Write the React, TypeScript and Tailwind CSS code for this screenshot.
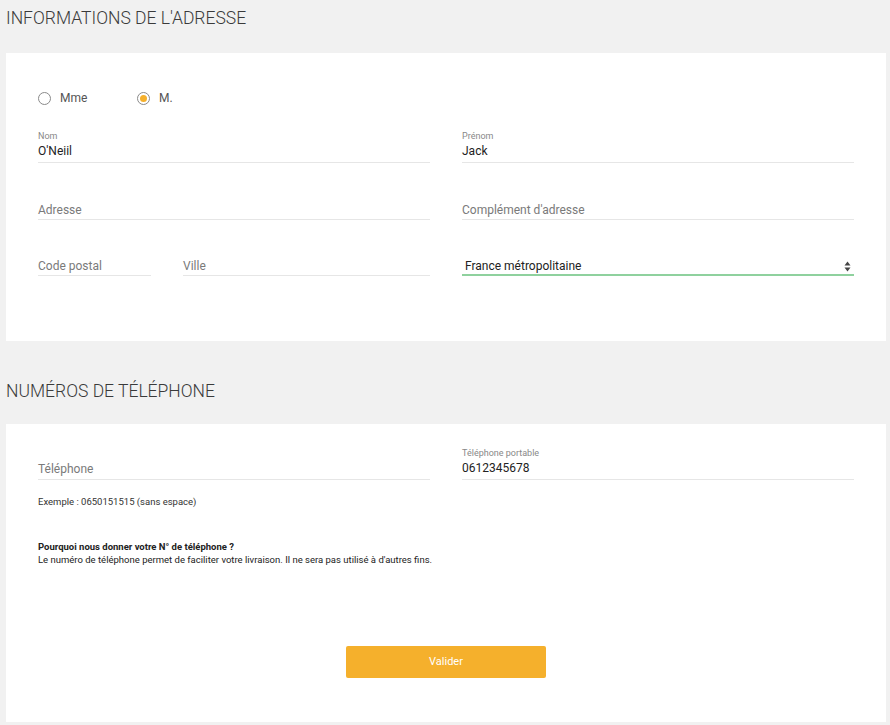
import React from "react";

const font = { fontFamily: "Roboto, 'Liberation Sans', sans-serif" };

function Radio({ label, checked, className = "" }: { label: string; checked?: boolean; className?: string }) {
  return (
    <label className={`flex items-center gap-[9px] h-[12px] ${className}`}>
      <span className="w-[13px] h-[13px] rounded-full border border-[#8a8a8a] flex items-center justify-center bg-white">
        {checked && <span className="w-[7px] h-[7px] rounded-full bg-[#f5b02c]" />}
      </span>
      <span className="text-[12px] text-[#555] leading-none">{label}</span>
    </label>
  );
}

function Field({
  label,
  value,
  placeholder,
  className = "",
}: {
  label?: string;
  value?: string;
  placeholder?: string;
  className?: string;
}) {
  return (
    <div className={`flex flex-col justify-end border-b border-[#e6e6e6] ${className}`}>
      {label && <span className="text-[9px] leading-[11px] text-[#888]">{label}</span>}
      {value ? (
        <span className="text-[12px] leading-[16px] text-[#222] mt-[1px] pb-[3px]">{value}</span>
      ) : (
        <span className="text-[12px] leading-[16px] text-[#7a7a7a] pb-[1px]">{placeholder}</span>
      )}
    </div>
  );
}

export default function App() {
  return (
    <div className="min-h-screen w-full bg-[#f1f1f1] pb-[4px]" style={font}>
      <h2 className="pt-[6px] pl-[6px] text-[17.5px] leading-[24px] font-light text-[#3a3a3a] mb-[23px]">
        INFORMATIONS DE L'ADRESSE
      </h2>

      <div className="ml-[6px] w-[880px] bg-white px-[32px] pt-[39px] pb-[65px]">
        <div className="flex">
          <Radio label="Mme" className="w-[99px]" />
          <Radio label="M." checked />
        </div>

        <div className="grid grid-cols-2 gap-x-[32px] mt-[27px]">
          <Field label="Nom" value="O'Neiil" />
          <Field label="Prénom" value="Jack" />
        </div>

        <div className="grid grid-cols-2 gap-x-[32px] mt-[39px]">
          <Field placeholder="Adresse" />
          <Field placeholder="Complément d'adresse" />
        </div>

        <div className="grid grid-cols-2 gap-x-[32px] mt-[38px]">
          <div className="flex gap-[32px]">
            <Field placeholder="Code postal" className="w-[113px]" />
            <Field placeholder="Ville" className="flex-1" />
          </div>
          <div className="flex items-center justify-between border-b-2 border-[#8fd19e] pl-[3px] pr-[2px] h-[18px]">
            <span className="text-[12px] leading-[16px] text-[#222]">France métropolitaine</span>
            <svg width="7" height="11" viewBox="0 0 7 11" className="mr-[1px]">
              <path d="M3.5 0.5 L6.5 4.5 L0.5 4.5 Z" fill="#444" />
              <path d="M3.5 10.5 L6.5 6.5 L0.5 6.5 Z" fill="#444" />
            </svg>
          </div>
        </div>
      </div>

      <h2 className="mt-[38px] pl-[6px] text-[17.5px] leading-[24px] font-light text-[#3a3a3a] mb-[21px]">
        NUMÉROS DE TÉLÉPHONE
      </h2>

      <div className="ml-[6px] w-[880px] bg-white px-[32px] pt-[25px] pb-[44px]">
        <div className="grid grid-cols-2 gap-x-[32px]">
          <Field placeholder="Téléphone" className="h-[31px] pb-[1px]" />
          <Field label="Téléphone portable" value="0612345678" className="h-[31px]" />
        </div>

        <p className="mt-[16px] text-[9.5px] leading-[11px] text-[#333]">Exemple : 0650151515 (sans espace)</p>

        <div className="mt-[33px] text-[9.5px] leading-[13px] text-[#222]">
          <p className="font-bold">Pourquoi nous donner votre N° de téléphone ?</p>
          <p>Le numéro de téléphone permet de faciliter votre livraison. Il ne sera pas utilisé à d'autres fins.</p>
        </div>

        <div className="flex justify-center mt-[80px]">
          <button className="w-[200px] h-[32px] rounded-[2px] bg-[#f5b02c] text-white text-[11px]">
            Valider
          </button>
        </div>
      </div>
    </div>
  );
}
